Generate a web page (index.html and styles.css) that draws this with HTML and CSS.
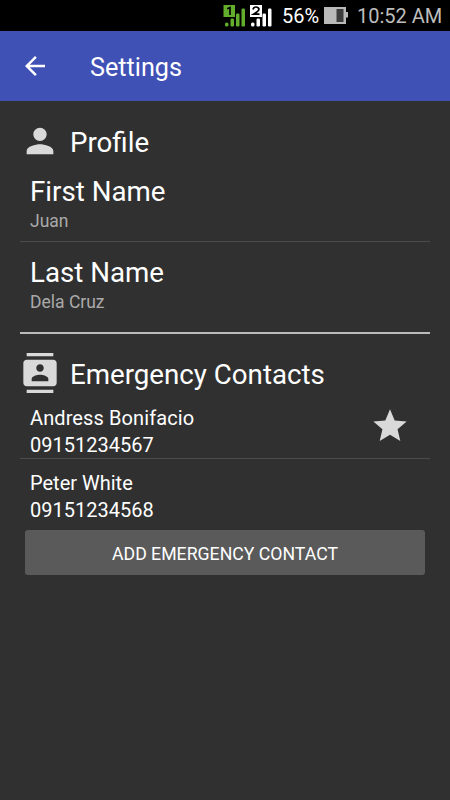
FILE: index.html
```html
<!DOCTYPE html>
<html lang="en">
<head>
<meta charset="utf-8">
<title>Settings</title>
<link rel="stylesheet" href="styles.css">
</head>
<body>
<div class="status">
  <svg class="signals" width="50" height="31" viewBox="0 0 50 31">
    <g fill="#62ad2b">
      <path d="M0.500 5h11.500v12H0.500z"/>
      <rect x="2" y="22.500" width="3.500" height="4" rx="1.500"/>
      <rect x="7.500" y="18.500" width="3.500" height="8" rx="1.200"/>
      <rect x="13" y="13.500" width="3.500" height="13" rx="1.200"/>
      <rect x="18.500" y="8.500" width="3.500" height="18" rx="1.200"/>
    </g>
    <g fill="#fff">
      <path d="M27 5h12v12H27z"/>
      <rect x="28" y="22.500" width="3.500" height="4" rx="1.500"/>
      <rect x="33.500" y="18.500" width="3.500" height="8" rx="1.200"/>
      <rect x="39.500" y="13.500" width="3.500" height="13" rx="1.200"/>
      <rect x="45" y="8.500" width="3.500" height="18" rx="1.200"/>
    </g>
    <path fill="none" stroke="#000" stroke-width="1.700" d="M4.200 8.800l2.800-1.300v7.500M30 9.500q.5-2.500 3-2.500t3 2.200q0 1.500-5.500 5h6"/>
  </svg>
  <span class="percent">56%</span>
  <svg class="battery" width="24" height="18" viewBox="0 0 24 18"><path fill="#b9b9b9" d="M0 1h22v5h2v5.500h-2V18H0z"/><path fill="#3c3c3c" d="M12.500 3h7v13h-7z"/></svg>
  <span class="time">10:52 AM</span>
</div>
<header class="bar">
  <svg class="back" width="30" height="30" viewBox="0 0 24 24"><path fill="#fff" d="M20 11H7.830l5.590-5.590L12 4l-8 8 8 8 1.410-1.410L7.830 13H20v-2z"/></svg>
  <h1 class="title">Settings</h1>
</header>
<main class="content">
  <section class="profile">
    <h2 class="heading"><svg width="40" height="40" viewBox="0 0 24 24"><path fill="#d9d9d9" d="M12 12c2.210 0 4-1.790 4-4s-1.790-4-4-4-4 1.790-4 4 1.790 4 4 4zm0 2c-2.670 0-8 1.340-8 4v2h16v-2c0-2.660-5.330-4-8-4z"/></svg><span>Profile</span></h2>
    <div class="field"><div class="label">First Name</div><div class="value">Juan</div></div>
    <div class="field last"><div class="label">Last Name</div><div class="value">Dela Cruz</div></div>
  </section>
  <section class="contacts">
    <h2 class="heading"><svg width="40" height="40" viewBox="0 0 24 24"><path fill="#d9d9d9" d="M20 0H4v2h16V0zM4 24h16v-2H4v2zM20 4H4c-1.100 0-2 .9-2 2v12c0 1.100.9 2 2 2h16c1.100 0 2-.9 2-2V6c0-1.100-.9-2-2-2zm-8 2.750c1.240 0 2.250 1.010 2.250 2.250s-1.010 2.250-2.250 2.250S9.750 10.240 9.750 9 10.760 6.750 12 6.750zM17 17H7v-1.500c0-1.670 3.330-2.500 5-2.500s5 .83 5 2.500V17z"/></svg><span>Emergency Contacts</span></h2>
    <div class="contact first"><div><div class="name">Andress Bonifacio</div><div>09151234567</div></div>
      <svg width="40" height="40" viewBox="0 0 24 24"><path fill="#d9d9d9" d="M12 17.270L18.180 21l-1.640-7.030L22 9.240l-7.190-.61L12 2 9.190 8.630 2 9.240l5.460 4.730L5.820 21z"/></svg></div>
    <div class="contact"><div><div>Peter White</div><div>09151234568</div></div></div>
    <button class="add">ADD EMERGENCY CONTACT</button>
  </section>
</main>
</body>
</html>
```
FILE: styles.css
```css
* { box-sizing: border-box; }
body { margin: 0; height: 800px; background: #303030; color: #fff; font-family: Roboto, sans-serif; overflow: hidden; }
.status { height: 31px; background: #000; display: flex; align-items: center; padding-left: 223px; font-size: 20px; white-space: nowrap; }
.percent { margin-left: 9px; width: 42px; }
.battery { flex: none; margin-top: -1px; }
.signals { flex: none; }
.time { margin-left: 9px; color: #bdbdbd; }
.bar { height: 70px; background: #3f51b5; display: flex; align-items: center; padding: 1px 0 0 20px; }
.back { margin-top: -1px; }
.title { margin: 2px 0 0 40px; font-size: 25.2px; font-weight: 400; }
.content { padding: 20px 20px 0; }
.heading { margin: 0; height: 42px; display: flex; align-items: center; font-size: 27.7px; font-weight: 400; }
.heading svg { margin-top: -2px; }
.heading span { margin: 0 0 0 10px; white-space: nowrap; }
.field { height: 79px; padding: 12px 10px 0; border-bottom: 1px solid #4b4b4b; }
.last { height: 92px; padding-top: 14px; border-bottom: 2px solid #bbb; }
.label { font-size: 27.7px; line-height: 33px; }
.value { font-size: 17.5px; line-height: 26px; color: #aaa; }
.contacts { padding-top: 19px; }
.contact { height: 71px; padding: 11px 10px 0; display: flex; justify-content: space-between; align-items: flex-start; font-size: 20px; line-height: 27px; }
.contact svg { margin: 1px 10px 0 0; }
.name { letter-spacing: .1px; }
.contact.first { height: 64px; padding-top: 10px; border-bottom: 1px solid #4b4b4b; }
.add { display: block; width: 400px; height: 45px; margin: 0 5px; border: 0; border-radius: 3px; background: #5a5a5a; color: #fff; font: 17.7px Roboto, sans-serif; padding: 2px 0 0; }
```
